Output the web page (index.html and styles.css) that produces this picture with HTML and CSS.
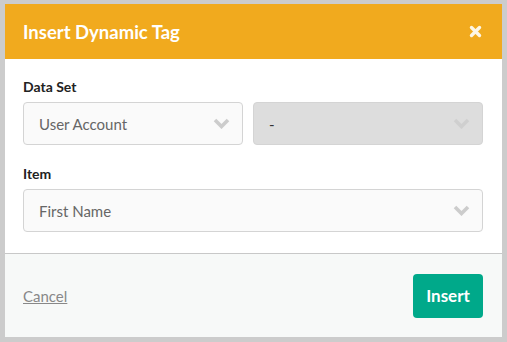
FILE: index.html
```html
<!DOCTYPE html>
<html lang="en">
<head>
    <meta charset="UTF-8">
    <meta name="viewport" content="width=device-width, initial-scale=1.0">
    <title>Insert Dynamic Tag</title>
    <link rel="stylesheet" href="styles.css">
</head>
<body>
    <div class="modal">
        <div class="modal-header">
            <h2>Insert Dynamic Tag</h2>
            <button class="close-btn" aria-label="Close">
                <svg width="13" height="13" viewBox="0 0 13 13">
                    <path d="M2.5 2.5 L10.5 10.5 M10.5 2.5 L2.5 10.5" stroke="#fdf6e6" stroke-width="3.4" stroke-linecap="round"/>
                </svg>
            </button>
        </div>

        <div class="modal-body">
            <label>Data Set</label>
            <div class="select-row">
                <div class="select dataset">
                    <span>User Account</span>
                    <svg class="chevron" width="17" height="11" viewBox="0 0 17 11"><polyline points="2,2 8.5,8.5 15,2" fill="none" stroke="#cccccc" stroke-width="3.6"/></svg>
                </div>
                <div class="select disabled">
                    <span>-</span>
                    <svg class="chevron" width="17" height="11" viewBox="0 0 17 11"><polyline points="2,2 8.5,8.5 15,2" fill="none" stroke="#cfcfcf" stroke-width="3.6"/></svg>
                </div>
            </div>

            <label class="item-label">Item</label>
            <div class="select">
                <span>First Name</span>
                <svg class="chevron" width="17" height="11" viewBox="0 0 17 11"><polyline points="2,2 8.5,8.5 15,2" fill="none" stroke="#cccccc" stroke-width="3.6"/></svg>
            </div>
        </div>

        <div class="modal-footer">
            <a href="#" class="cancel">Cancel</a>
            <button class="insert-btn">Insert</button>
        </div>
    </div>
</body>
</html>
```

FILE: styles.css
```css
body {
    margin: 0;
    padding: 4px 5px 5px 5px;
    background-color: #cccccc;
    font-family: Lato, 'Open Sans', Arial, sans-serif;
}
.modal {
    background: #fff;
    height: 333px;
    display: flex;
    flex-direction: column;
}
.modal-header {
    height: 55px;
    background-color: #f1aa1e;
    display: flex;
    align-items: center;
    justify-content: space-between;
    padding: 0 20px 0 18px;
}
.modal-header h2 {
    margin: 0;
    color: #fff;
    font-size: 18.5px;
    font-weight: 700;
}
.close-btn {
    background: none;
    border: none;
    padding: 0;
    display: flex;
    cursor: pointer;
}
.modal-body {
    padding: 19px 19px 21px 18px;
    border-bottom: 1px solid #c8c8c8;
}
label {
    display: block;
    font-size: 14px;
    font-weight: 700;
    color: #222;
    line-height: 17px;
    margin-bottom: 7px;
}
.item-label {
    margin-top: 20px;
}
.select-row {
    display: flex;
    gap: 10px;
}
.select-row .select {
    flex: 1 1 0;
    min-width: 0;
}
.select-row .dataset {
    flex: 0 0 220px;
}
.select {
    height: 43px;
    box-sizing: border-box;
    border: 1px solid #d4d4d4;
    border-radius: 4px;
    background: #fafafa;
    display: flex;
    align-items: center;
    justify-content: space-between;
    padding: 0 12px 0 15px;
    font-size: 15px;
    color: #666;
}
.select.disabled {
    background: #dddddd;
    border-color: #d4d4d4;
    color: #333;
}
.modal-footer {
    flex: 1;
    background: #f7f9f8;
    display: flex;
    align-items: center;
    justify-content: space-between;
    padding: 0 19px 0 18px;
}
.cancel {
    color: #888;
    font-size: 15px;
    text-decoration: underline;
}
.insert-btn {
    background-color: #00a98a;
    color: #fff;
    border: none;
    border-radius: 4px;
    width: 70px;
    height: 44px;
    font-family: inherit;
    font-size: 17px;
    font-weight: 700;
    cursor: pointer;
}
```
